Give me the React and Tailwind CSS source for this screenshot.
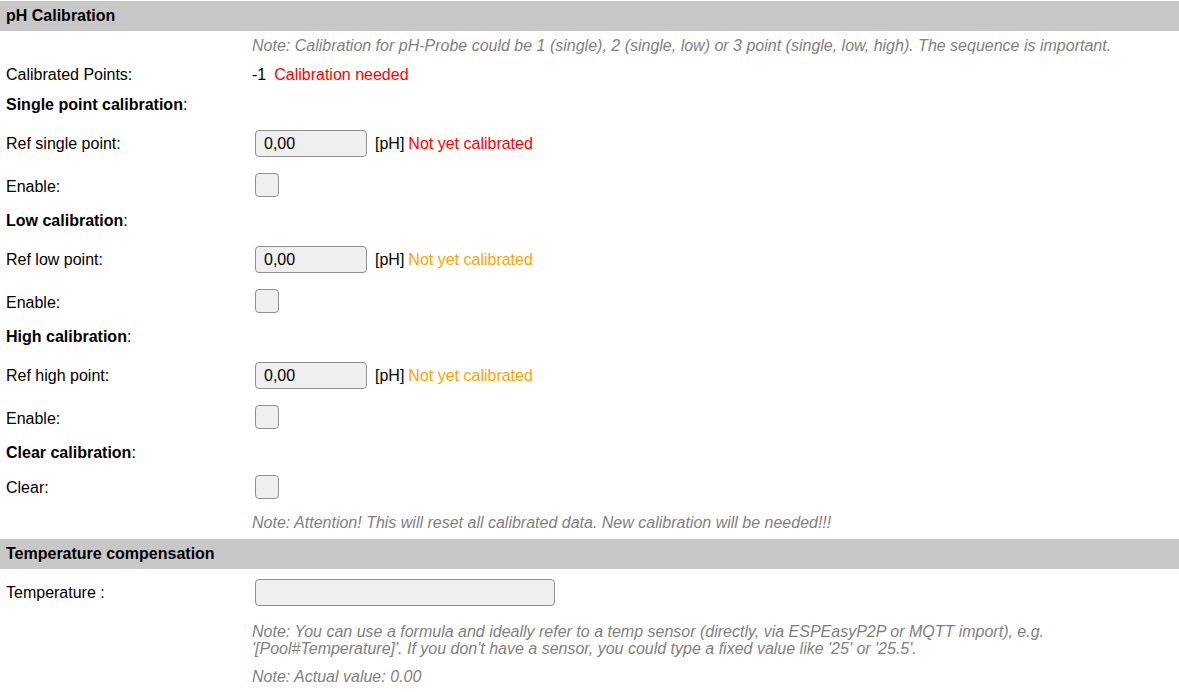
import React from "react";

const font = { fontFamily: '"Liberation Sans", Arial, sans-serif' };

function Header({ children }) {
  return (
    <div className="mt-px h-[30px] bg-[#c8c8c8] flex items-center pl-[6px] font-bold text-[16px] text-black">
      {children}
    </div>
  );
}

function Row({ label, h = "h-[30px]", children, bold }) {
  return (
    <div className={`flex items-center ${h}`}>
      <div className="w-[252px] pl-[6px] shrink-0">
        {bold ? (
          <span>
            <b>{label}</b>:
          </span>
        ) : (
          label
        )}
      </div>
      <div className="flex items-center">{children}</div>
    </div>
  );
}

function Note({ children }) {
  return <span className="italic text-[#7f7f7f]">{children}</span>;
}

function NumInput() {
  return (
    <div className="ml-[3px] w-[112px] h-[27px] rounded-[4px] border border-[#8f8f8f] bg-[#efefef] flex items-center pl-[8px] text-[16px]">
      0,00
    </div>
  );
}

function Check() {
  return (
    <div className="ml-[3px] mb-[3px] w-[24px] h-[24px] rounded-[4px] border border-[#8f8f8f] bg-[#efefef]" />
  );
}

function RefRow({ label, color }) {
  return (
    <Row label={label} h="h-[47px]">
      <NumInput />
      <span className="ml-[8px]">[pH]</span>
      <span className={`ml-[4px] ${color}`}>Not yet calibrated</span>
    </Row>
  );
}

function EnableRow({ label = "Enable:", h = "h-[39px]" }) {
  return (
    <Row label={label} h={h}>
      <Check />
    </Row>
  );
}

export default function App() {
  return (
    <div className="w-[1179px] h-[692px] bg-white text-black text-[16px] leading-[18px] overflow-hidden" style={font}>
      <Header>pH Calibration</Header>
      <div className="flex items-center h-[29px] pl-[252px]">
        <Note>
          Note: Calibration for pH-Probe could be 1 (single), 2 (single, low) or 3 point (single, low, high). The sequence is important.
        </Note>
      </div>
      <Row label="Calibrated Points:">
        <span>-1</span>
        <span className="ml-[8px] text-[#ff0000]">Calibration needed</span>
      </Row>
      <Row label="Single point calibration" bold />
      <RefRow label="Ref single point:" color="text-[#ff0000]" />
      <EnableRow />
      <Row label="Low calibration" bold />
      <RefRow label="Ref low point:" color="text-[#ffa500]" />
      <EnableRow />
      <Row label="High calibration" bold />
      <RefRow label="Ref high point:" color="text-[#ffa500]" />
      <EnableRow />
      <Row label="Clear calibration" bold />
      <EnableRow label="Clear:" h="h-[40px]" />
      <div className="flex items-center h-[30px] pl-[252px]">
        <Note>Note: Attention! This will reset all calibrated data. New calibration will be needed!!!</Note>
      </div>
      <Header>Temperature compensation</Header>
      <Row label="Temperature :" h="h-[47px]">
        <div className="ml-[3px] w-[300px] h-[27px] rounded-[4px] border border-[#8f8f8f] bg-[#efefef]" />
      </Row>
      <div className="flex items-center h-[47px] pl-[252px] leading-[17px]">
        <Note>
          Note: You can use a formula and ideally refer to a temp sensor (directly, via ESPEasyP2P or MQTT import), e.g.
          <br />
          '[Pool#Temperature]'. If you don't have a sensor, you could type a fixed value like '25' or '25.5'.
        </Note>
      </div>
      <div className="flex items-center h-[28px] pl-[252px]">
        <Note>Note: Actual value: 0.00</Note>
      </div>
    </div>
  );
}
